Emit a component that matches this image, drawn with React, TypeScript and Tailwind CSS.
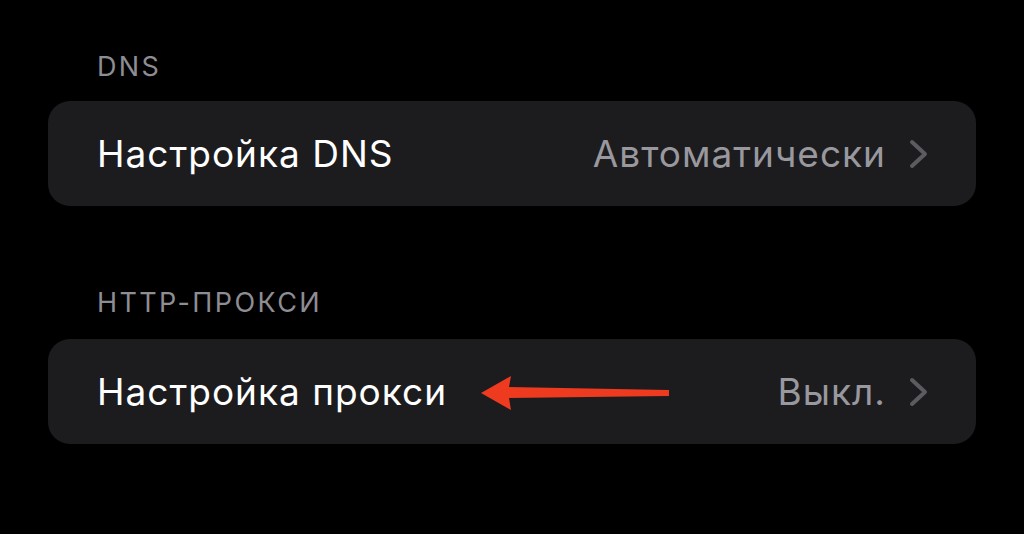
import React from "react";

function Chevron() {
  return (
    <svg width="20" height="30" viewBox="0 0 20 30" className="shrink-0">
      <path d="M3 3 L16 15 L3 27" fill="none" stroke="#5b5b60" strokeWidth="4" strokeLinecap="round" strokeLinejoin="round" />
    </svg>
  );
}

function Arrow() {
  return (
    <svg width="190" height="38" viewBox="0 0 190 38" className="shrink-0">
      <path d="M1 19 L31 2 L29 13 L189 16 L189 22 L29 24 L31 36 Z" fill="#ee3a1f" />
    </svg>
  );
}

export default function App() {
  const font = { fontFamily: "Inter, 'Noto Sans', sans-serif" };
  return (
    <div className="w-[1024px] h-[534px] bg-black overflow-hidden flex flex-col px-[48px] pt-[49px]" style={font}>
      <div className="h-[36px] flex items-center pl-[49px] text-[27px] text-[#8d8d93] tracking-[2.3px]">DNS</div>
      <div className="mt-[16px] h-[105px] rounded-[22px] bg-[#1c1c1e] flex items-center pl-[49px] pr-[47px]">
        <span className="text-[37px] text-white tracking-[1px]">Настройка DNS</span>
        <span className="ml-auto text-[37px] text-[#98989e] mr-[23px] tracking-[1px]">Автоматически</span>
        <Chevron />
      </div>
      <div className="mt-[79px] h-[36px] flex items-center pl-[49px] text-[27px] text-[#8d8d93] tracking-[2.4px]">HTTP-ПРОКСИ</div>
      <div className="mt-[18px] h-[105px] rounded-[22px] bg-[#1c1c1e] flex items-center pl-[49px] pr-[47px]">
        <span className="text-[37px] text-white tracking-[1px]">Настройка прокси</span>
        <span className="ml-[33px] mt-[2px] flex"><Arrow /></span>
        <span className="ml-auto text-[37px] text-[#98989e] mr-[23px] tracking-[1px]">Выкл.</span>
        <Chevron />
      </div>
    </div>
  );
}
